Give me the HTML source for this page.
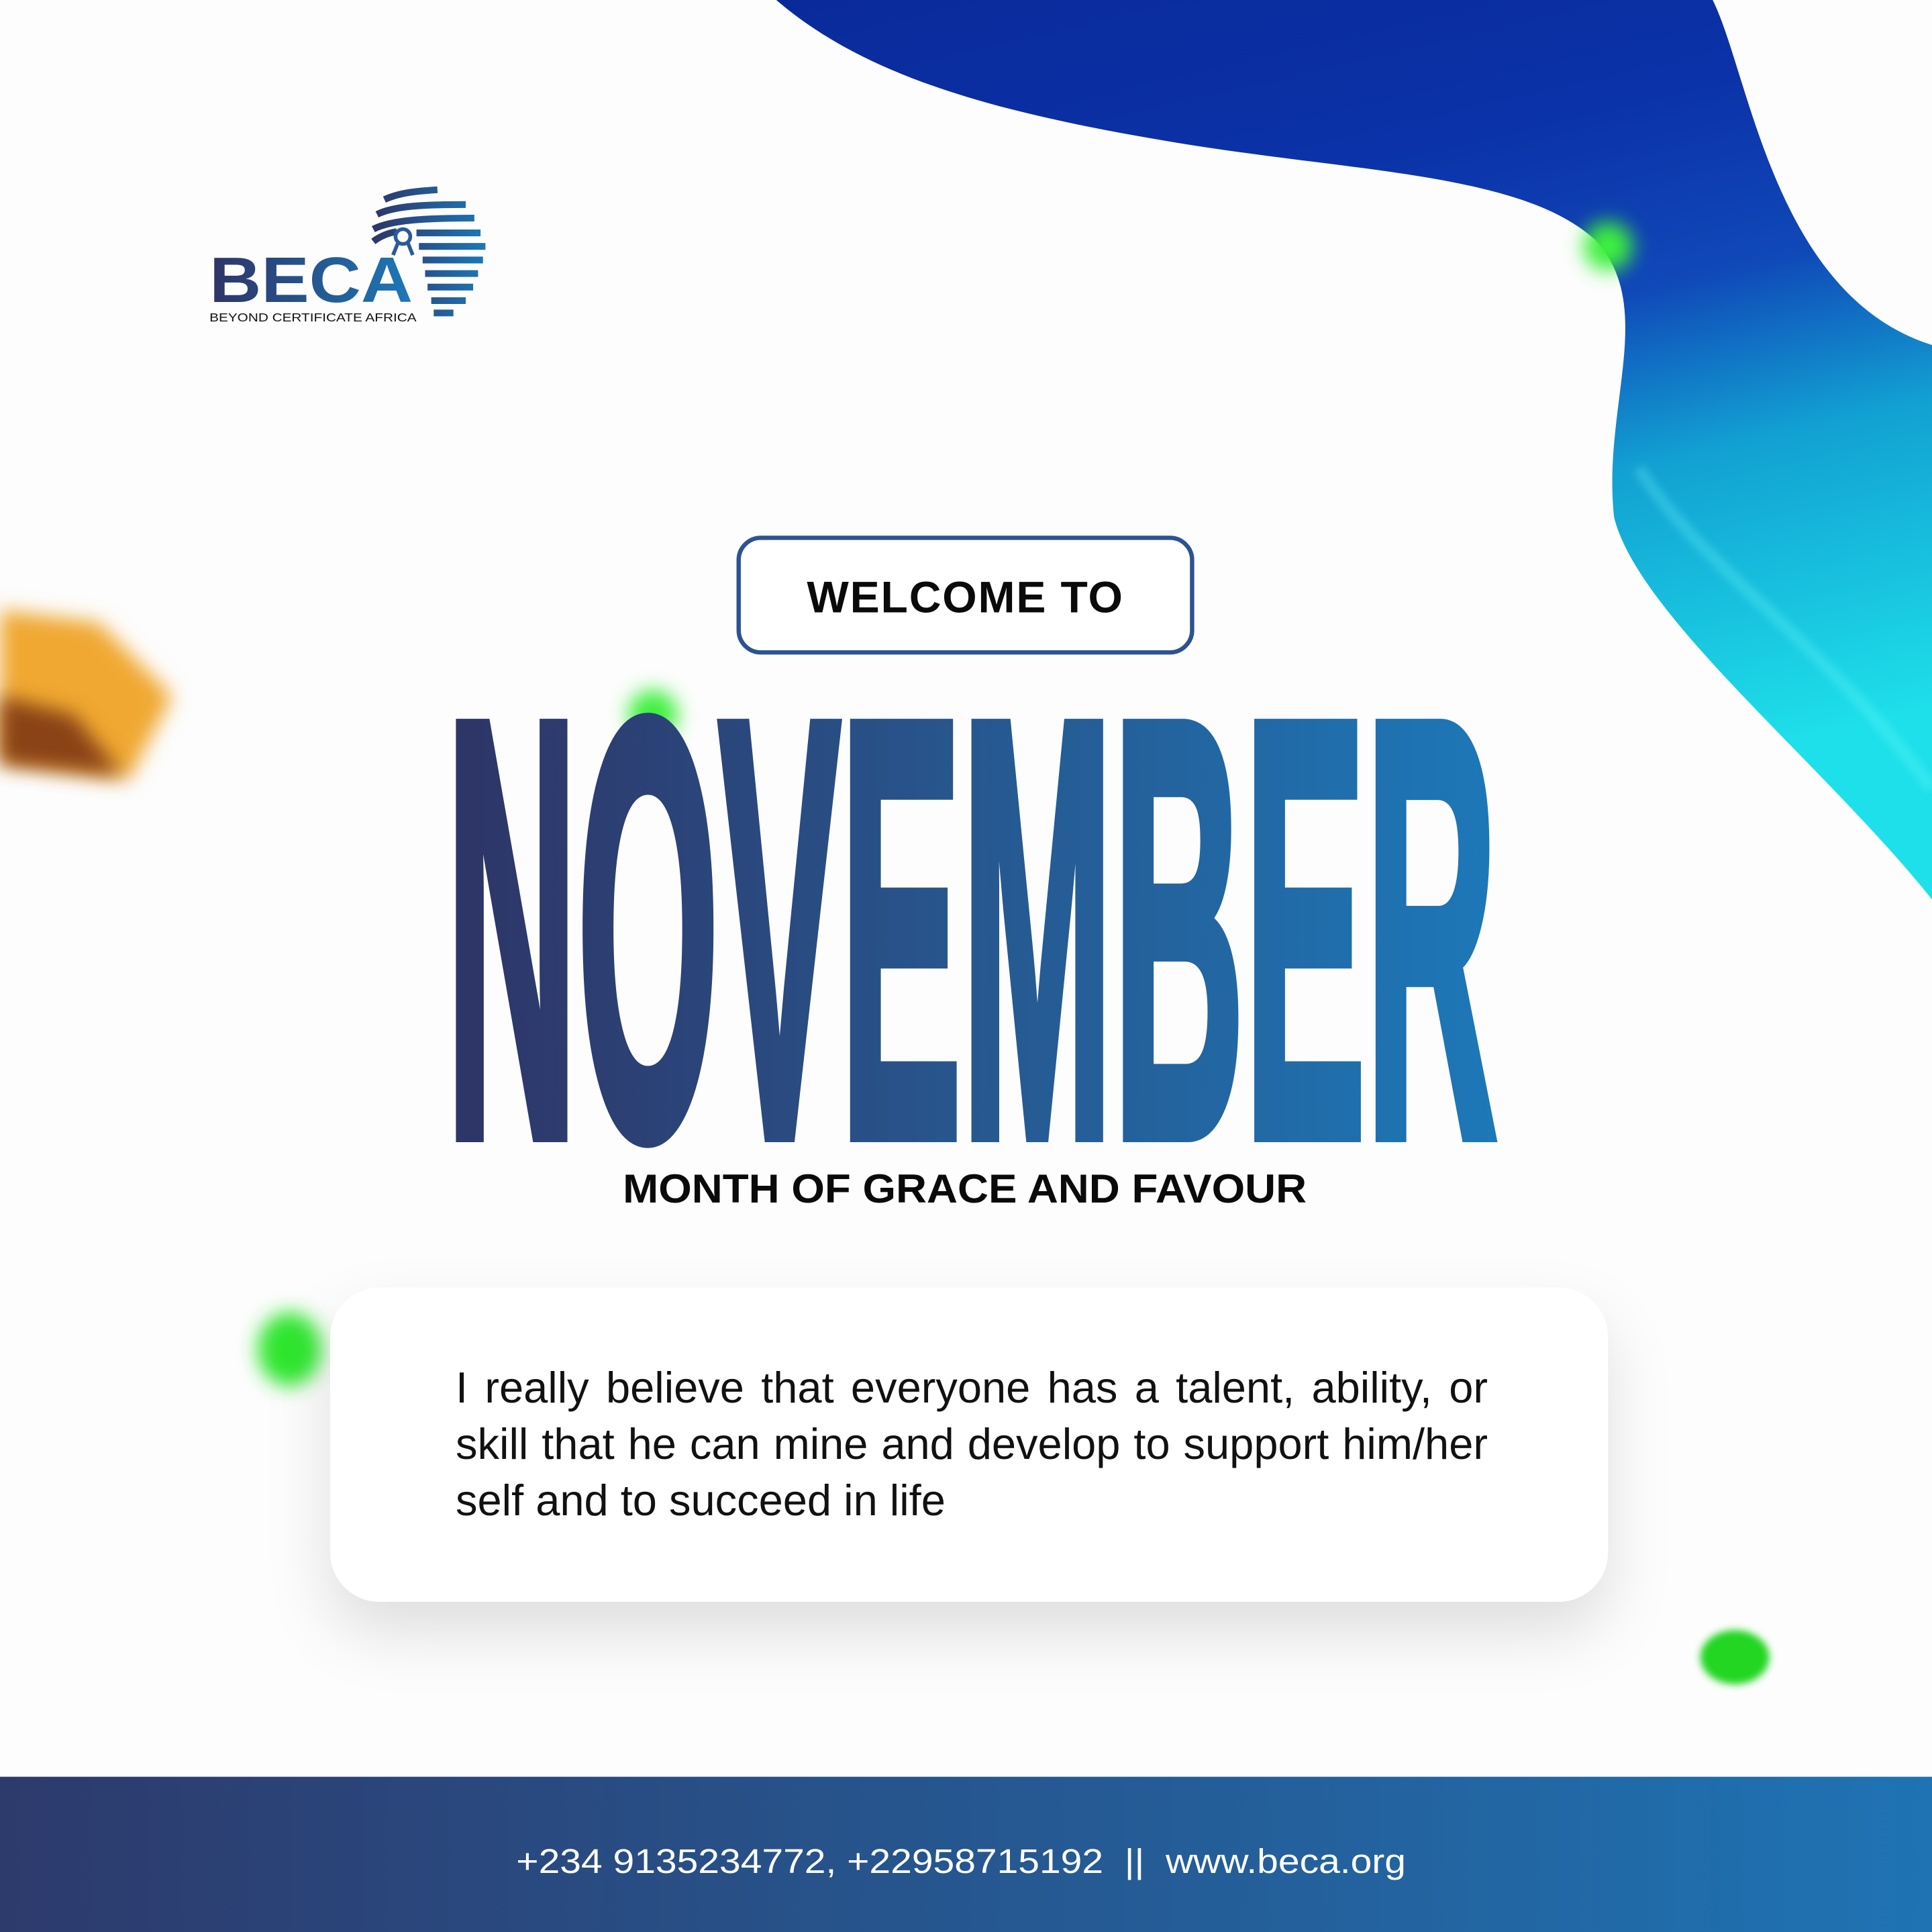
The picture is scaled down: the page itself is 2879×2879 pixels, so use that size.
<!DOCTYPE html>
<html><head><meta charset="utf-8"><style>
html,body{margin:0;padding:0;background:#fdfdfd;}
#w{position:relative;width:2879px;height:2879px;overflow:hidden;background:#fdfdfd;}
svg{position:absolute;left:0;top:0;}
.q{position:absolute;left:679px;top:2026px;width:1538px;font-family:"Liberation Sans",sans-serif;font-size:65px;line-height:84px;color:#111;text-align:justify;text-align-last:left;}
</style></head><body><div id="w">
<svg width="2879" height="2879" viewBox="0 0 1568 1568">
<defs>
<linearGradient id="rb" x1="0" y1="0" x2="0.3" y2="1">
<stop offset="0" stop-color="#0a2a9a"/><stop offset="0.3" stop-color="#0b32a8"/><stop offset="0.5" stop-color="#1048b8"/><stop offset="0.68" stop-color="#12a0d2"/><stop offset="1" stop-color="#1ee0ea"/></linearGradient>
<linearGradient id="nv" x1="0" y1="0" x2="1" y2="0"><stop offset="0" stop-color="#2e3466"/><stop offset="0.5" stop-color="#27578f"/><stop offset="1" stop-color="#1d78b8"/></linearGradient>
<linearGradient id="ft" x1="0" y1="0" x2="1" y2="0"><stop offset="0" stop-color="#2d3a6c"/><stop offset="1" stop-color="#1f73b3"/></linearGradient>
<linearGradient id="lg" x1="0" y1="0" x2="1" y2="0"><stop offset="0" stop-color="#2e3466"/><stop offset="1" stop-color="#1d78b8"/></linearGradient>
<linearGradient id="lu" gradientUnits="userSpaceOnUse" x1="300" y1="0" x2="395" y2="0"><stop offset="0" stop-color="#2e3466"/><stop offset="1" stop-color="#1d78b8"/></linearGradient>
<filter id="b8" x="-100%" y="-100%" width="300%" height="300%"><feGaussianBlur stdDeviation="8"/></filter>
<filter id="b3" x="-100%" y="-100%" width="300%" height="300%"><feGaussianBlur stdDeviation="3"/></filter>
<filter id="sh" x="-20%" y="-30%" width="140%" height="170%"><feDropShadow dx="0" dy="25" stdDeviation="25" flood-color="#000" flood-opacity="0.12"/></filter>
</defs>
<path d="M630,0 L1390,0 C1420,60 1440,240 1568,280 L1568,730 C1480,620 1330,500 1310,420 C1300,330 1345,250 1295,195 C1235,140 1100,140 950,115 C800,90 700,60 630,0 Z" fill="url(#rb)"/>
<path d="M1330,380 C1380,460 1480,520 1568,640" stroke="#7ff" stroke-width="10" fill="none" opacity="0.25" filter="url(#b3)"/>
<path d="M0,495 L80,505 L140,565 L105,632 L0,618 Z" fill="#f0a830" filter="url(#b8)"/>
<path d="M0,565 L60,580 L100,630 L0,620 Z" fill="#8a4218" filter="url(#b8)"/>
<circle cx="1305" cy="200" r="20" fill="#3ef03e" filter="url(#b8)"/>
<circle cx="530" cy="580" r="20" fill="#3ef03e" filter="url(#b8)"/>
<ellipse cx="235" cy="1095" rx="26" ry="30" fill="#2fe62f" filter="url(#b8)"/>
<ellipse cx="1408" cy="1345" rx="28" ry="22" fill="#22d622" filter="url(#b3)"/>
<rect x="268" y="1045" width="1037" height="255" rx="40" fill="#fff" filter="url(#sh)"/>
<rect x="599.5" y="436.5" width="368" height="93" rx="18" fill="#fff" stroke="#2c5290" stroke-width="3.5"/>
<text x="783.5" y="497" text-anchor="middle" font-family="Liberation Sans, sans-serif" font-weight="bold" font-size="36" fill="#0a0a0a" letter-spacing="1">WELCOME TO</text>
<text x="362" y="921" font-family="Liberation Sans, sans-serif" font-weight="bold" font-size="482" textLength="853" lengthAdjust="spacingAndGlyphs" fill="url(#nv)" stroke="url(#nv)" stroke-width="12" stroke-linejoin="miter">NOVEMBER</text>
<text x="783" y="976" text-anchor="middle" font-family="Liberation Sans, sans-serif" font-weight="bold" font-size="33" textLength="555" lengthAdjust="spacingAndGlyphs" fill="#0a0a0a">MONTH OF GRACE AND FAVOUR</text>
<rect x="0" y="1442" width="1568" height="126" fill="url(#ft)"/>
<text x="780" y="1520" text-anchor="middle" font-family="Liberation Sans, sans-serif" font-size="28" fill="#fff" textLength="722" lengthAdjust="spacingAndGlyphs" xml:space="preserve">+234 9135234772, +22958715192  ||  www.beca.org</text>
<text x="170" y="245" font-family="Liberation Sans, sans-serif" font-weight="bold" font-size="52" fill="url(#lg)" textLength="165" lengthAdjust="spacingAndGlyphs">BECA</text>
<text x="170" y="261" font-family="Liberation Sans, sans-serif" font-size="9.5" fill="#111" textLength="168" lengthAdjust="spacingAndGlyphs">BEYOND CERTIFICATE AFRICA</text>
<g stroke="url(#lu)" stroke-width="5.5" stroke-linecap="butt" fill="none">
<path d="M312,162 C325,156 340,155 355,154"/>
<path d="M306,174 C320,167 345,166 378,166"/>
<path d="M303,186 C318,178 350,177 385,177"/>
<path d="M303,196 C308,192 315,189 322,188"/>
<path d="M338,189 L390,189"/>
<path d="M340,200 L394,200"/>
<path d="M343,211 L392,211"/>
<path d="M345,222 L388,222"/>
<path d="M347,233 L384,233"/>
<path d="M350,244 L378,244"/>
<path d="M352,254 L368,254"/>
</g>
<circle cx="327" cy="192" r="6" fill="none" stroke="#2a5a9a" stroke-width="3"/>
<path d="M323,197 L319,207 M331,197 L335,207" stroke="#2a5a9a" stroke-width="3"/>
</svg>
<div class="q">I really believe that everyone has a talent, ability, or skill that he can mine and develop to support him/her self and to succeed in life</div>
</div></body></html>
